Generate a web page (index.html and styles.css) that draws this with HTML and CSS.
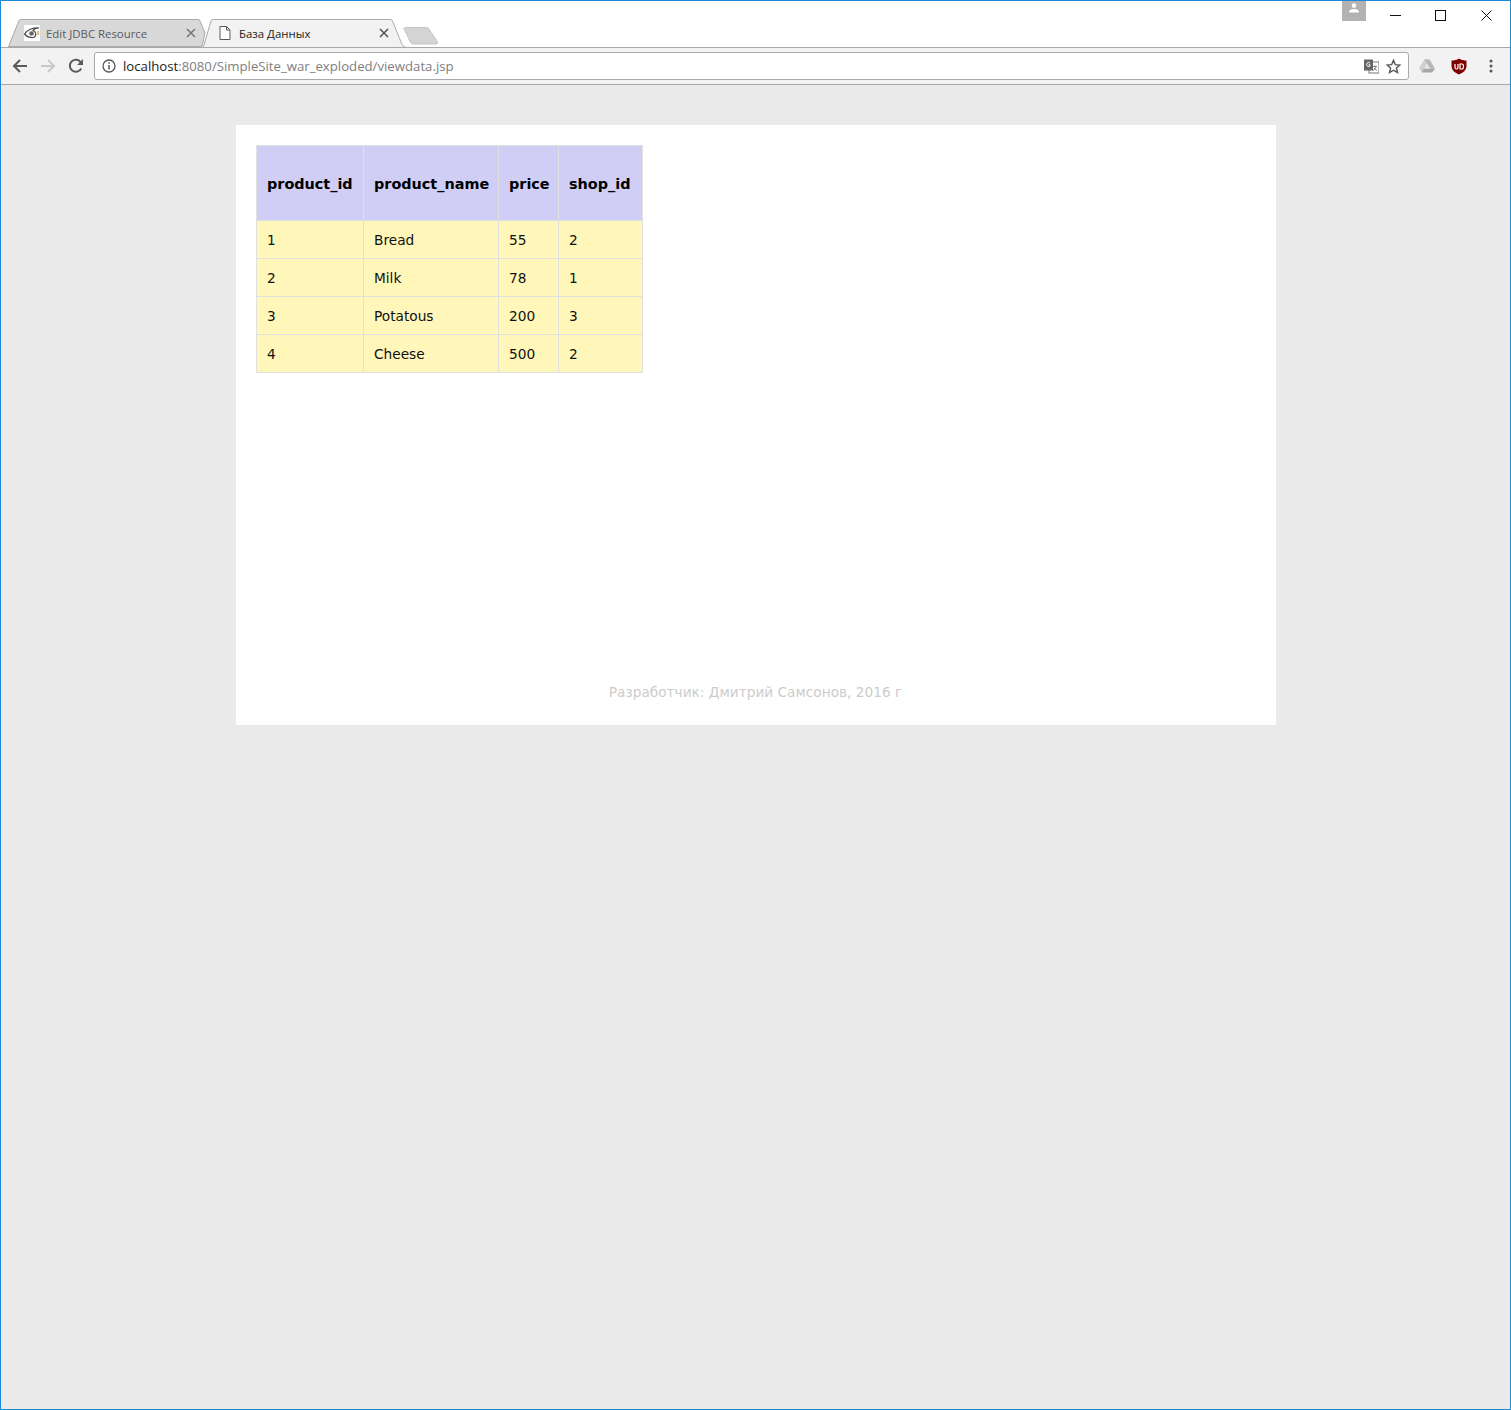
FILE: index.html
```html
<!DOCTYPE html>
<html>
<head>
    <title>База Данных</title>
    <meta charset="UTF-8">
    <link rel="stylesheet" href="styles.css">
</head>
<body>
    <div class="window">
        <div class="titlebar">
            <div class="tabs">
                <div class="tab tab-back">
                    <svg class="tab-shape" width="200" height="28" viewBox="0 0 200 28"><path d="M0.5 27.500 L11 1.500 Q11.500 0.500 13 0.500 H190 Q191.500 0.500 192 2 L197 14 L194 27.500 Z" fill="#d8d8d8" stroke="#a9a9a9"/></svg>
                    <svg class="favicon" width="16" height="16" viewBox="0 0 16 16">
                        <rect width="16" height="16" fill="#fff"/>
                        <path d="M0.500 9 C3 5 9 2.500 15 3 C12 3 10 4 9 5.500 C12 6.500 12.500 10 10.500 12 C7.500 13.500 3 12 0.500 9 Z" fill="#fff" stroke="#4a4a4a" stroke-width="1.200"/>
                        <circle cx="7.500" cy="8.500" r="2.300" fill="#666"/>
                        <path d="M14 6 V10" stroke="#e8a34a" stroke-width="1.500"/>
                    </svg>
                    <span class="tab-title">Edit JDBC Resource</span>
                    <svg class="tab-close" width="10" height="10" viewBox="0 0 10 10"><path d="M1 1 L9 9 M9 1 L1 9" stroke="#777" stroke-width="1.600"/></svg>
                </div>
                <div class="tab tab-active">
                    <svg class="tab-shape" width="206" height="28" viewBox="0 0 206 28"><path d="M0 27.500 H0.500 L8 2 Q8.500 0.500 10.500 0.500 H187 Q189 0.500 189.500 2 L199 25.500 Q200 27.500 202 27.500 H206 V28 H0 Z" fill="#f2f2f2" stroke="none"/><path d="M0 27.500 H0.500 L8 2 Q8.500 0.500 10.500 0.500 H187 Q189 0.500 189.500 2 L199 25.500 Q200 27.500 202 27.500" fill="none" stroke="#a9a9a9"/></svg>
                    <svg class="favicon" width="16" height="16" viewBox="0 0 16 16"><path d="M3 1.500 H9.500 L13 5 V14.500 H3 Z M9.500 1.500 V5 H13" fill="#fff" stroke="#5a5a5a"/></svg>
                    <span class="tab-title tab-title-active">База Данных</span>
                    <svg class="tab-close" width="10" height="10" viewBox="0 0 10 10"><path d="M1 1 L9 9 M9 1 L1 9" stroke="#555" stroke-width="1.600"/></svg>
                </div>
                <svg class="new-tab" width="36" height="19" viewBox="0 0 36 19"><path d="M1 1.500 Q1 0.500 2.500 0.500 H23 Q25 0.500 26 2 L34.500 15 Q35 17 33 17 H10 Q8.500 17 7.500 15.500 Z" fill="#d4d4d4" stroke="#c4c4c4"/></svg>
            </div>
            <div class="window-controls">
                <div class="profile">
                    <svg width="12" height="10" viewBox="0 0 12 10"><circle cx="6" cy="2.600" r="2.300" fill="#fff"/><path d="M1 9.500 C1 6.500 4 6 6 6 C8 6 11 6.500 11 9.500 Z" fill="#fff"/></svg>
                </div>
                <div class="control">
                    <svg width="11" height="11" viewBox="0 0 11 11"><path d="M0 5.500 H11" stroke="#111"/></svg>
                </div>
                <div class="control">
                    <svg width="11" height="11" viewBox="0 0 11 11"><rect x="0.500" y="0.500" width="10" height="10" fill="none" stroke="#111"/></svg>
                </div>
                <div class="control control-last">
                    <svg width="11" height="11" viewBox="0 0 11 11"><path d="M0.500 0.500 L10.500 10.500 M10.500 0.500 L0.500 10.500" stroke="#111"/></svg>
                </div>
            </div>
        </div>
        <div class="toolbar">
            <div class="nav">
                <svg width="16" height="16" viewBox="0 0 16 16"><path d="M15 8 H2.500 M8 2 L2 8 L8 14" fill="none" stroke="#5a5a5a" stroke-width="2"/></svg>
                <svg width="16" height="16" viewBox="0 0 16 16"><path d="M1 8 H13.500 M8 2 L14 8 L8 14" fill="none" stroke="#c9c9c9" stroke-width="2"/></svg>
                <svg width="16" height="16" viewBox="0 0 16 16"><path d="M13.200 10.500 A6 6 0 1 1 13 4.700" fill="none" stroke="#5a5a5a" stroke-width="2"/><path d="M15 1 V7 H9 Z" fill="#5a5a5a"/></svg>
            </div>
            <div class="omnibox">
                <svg class="info" width="14" height="14" viewBox="0 0 14 14"><circle cx="7" cy="7" r="6" fill="none" stroke="#555" stroke-width="1.300"/><path d="M7 6 V10.500 M7 3.300 V4.800" stroke="#555" stroke-width="1.500"/></svg>
                <div class="url"><span class="host">localhost</span>:8080/SimpleSite_war_exploded/viewdata.jsp</div>
                <svg class="translate" width="15" height="15" viewBox="0 0 15 15"><rect x="5" y="3" width="10" height="11" fill="#fff" stroke="#777"/><rect x="0" y="0.500" width="9" height="11" fill="#666"/><path d="M6 4 A2 2 0 1 0 6 7 V5.800 H4.500" fill="none" stroke="#fff"/><path d="M9 7.500 H13 M11 6.500 V7.500 M12 7.500 C11.500 10 10 11 9 11.500 M10 9 C10.700 10.300 11.800 11 13 11.500" fill="none" stroke="#777" stroke-width="0.900"/></svg>
                <svg class="star" width="15" height="15" viewBox="0 0 15 15"><path d="M7.500 1.300 L9.300 5.600 L14 6 L10.400 9 L11.500 13.600 L7.500 11.200 L3.500 13.600 L4.600 9 L1 6 L5.700 5.600 Z" fill="none" stroke="#555" stroke-width="1.400"/></svg>
            </div>
            <div class="extensions">
                <svg width="16" height="14" viewBox="0 0 16 14"><path d="M5.500 0.500 H10.500 L5 10 L2.700 13.500 L0 9 Z" fill="#cfcfcf"/><path d="M5.500 0.500 H10.500 L16 9.500 H11 Z" fill="#b8b8b8"/><path d="M5 9.500 H16 L13.300 13.500 H2.700 Z" fill="#a8a8a8"/><path d="M8 5 L10.500 9.500 H5.500 Z" fill="#e4e4e4"/></svg>
                <svg width="16" height="17" viewBox="0 0 16 17"><path d="M8 0.500 C10 2 13 2.500 15.500 2.500 V8 C15.500 12 12 15 8 16.500 C4 15 0.500 12 0.500 8 V2.500 C3 2.500 6 2 8 0.500 Z" fill="#800000"/><path d="M4 6 V9.500 Q4 11 5.500 11 Q7 11 7 9.500 V6 M9 6 H11 Q12.500 6 12.500 8.500 Q12.500 11 11 11 H9 Z" fill="none" stroke="#fff" stroke-width="1.200"/></svg>
                <svg class="menu" width="4" height="14" viewBox="0 0 4 14"><circle cx="2" cy="2" r="1.500" fill="#555"/><circle cx="2" cy="7" r="1.500" fill="#555"/><circle cx="2" cy="12" r="1.500" fill="#555"/></svg>
            </div>
        </div>
        <div class="page">
            <div class="content">
                <table class="data">
                    <colgroup>
                        <col class="col-id">
                        <col class="col-name">
                        <col class="col-price">
                        <col class="col-shop">
                    </colgroup>
                    <tr>
                        <th>product_id</th>
                        <th>product_name</th>
                        <th>price</th>
                        <th>shop_id</th>
                    </tr>
                    <tr><td>1</td><td>Bread</td><td>55</td><td>2</td></tr>
                    <tr><td>2</td><td>Milk</td><td>78</td><td>1</td></tr>
                    <tr><td>3</td><td>Potatous</td><td>200</td><td>3</td></tr>
                    <tr><td>4</td><td>Cheese</td><td>500</td><td>2</td></tr>
                </table>
                <div class="footer">Разработчик: Дмитрий Самсонов, 2016 г</div>
            </div>
        </div>
    </div>
</body>
</html>
```

FILE: styles.css
```css
html, body {
    margin: 0;
    height: 100%;
}
.window {
    box-sizing: border-box;
    height: 1410px;
    border: 1px solid #1a8ad4;
    display: flex;
    flex-direction: column;
    background: #eaeaea;
}
.titlebar {
    height: 46px;
    background: #fff;
    display: flex;
    justify-content: space-between;
    border-bottom: 1px solid #a9a9a9;
}
.tabs {
    display: flex;
    padding: 18px 0 0 7px;
}
.tab {
    position: relative;
    width: 200px;
    height: 28px;
    margin-right: -5px;
    display: flex;
    align-items: center;
    padding: 0 0 0 16px;
    box-sizing: border-box;
    font: 11.4px "Open Sans", sans-serif;
    color: #5a5a5a;
}
.tab-shape {
    position: absolute;
    left: 0;
    top: 0;
}
.tab .favicon, .tab .tab-title, .tab .tab-close {
    position: relative;
}
.tab-title {
    margin-left: 6px;
    flex: 1;
}
.tab-title-active {
    color: #222;
}
.tab-close {
    margin-right: 12px;
}
.tab-active {
    padding-left: 14px;
}
.tab-active .tab-close {
    margin-right: 14px;
}
.new-tab {
    margin: 8px 0 0 5px;
}
.window-controls {
    display: flex;
    align-items: flex-start;
}
.profile {
    width: 24px;
    height: 20px;
    background: #b2b2b2;
    display: flex;
    justify-content: center;
    padding-top: 2px;
    box-sizing: border-box;
    margin-right: 7px;
}
.control {
    width: 45px;
    height: 29px;
    display: flex;
    align-items: center;
    justify-content: center;
}
.control-last {
    width: 47px;
}
.toolbar {
    height: 36px;
    background: #f2f2f2;
    border-bottom: 1px solid #a9a9a9;
    display: flex;
    align-items: center;
}
.nav {
    display: flex;
    gap: 12px;
    padding-left: 11px;
    width: 93px;
    box-sizing: border-box;
}
.omnibox {
    width: 1315px;
    height: 28px;
    box-sizing: border-box;
    background: #fff;
    border: 1px solid #a9a9a9;
    border-radius: 3px;
    display: flex;
    align-items: center;
    padding: 0 7px;
}
.info {
    margin-right: 7px;
}
.url {
    flex: 1;
    font: 13.2px "Open Sans", sans-serif;
    color: #808080;
}
.host {
    color: #222;
}
.translate {
    margin-right: 7px;
}
.extensions {
    display: flex;
    align-items: center;
    padding-left: 10px;
    gap: 16px;
}
.menu {
    margin-left: 6px;
}
.page {
    flex: 1;
    display: flex;
    justify-content: center;
    padding-top: 40px;
}
.content {
    width: 1040px;
    height: 600px;
    background: #fff;
    box-sizing: border-box;
    padding: 20px;
    position: relative;
    font: 13.7px "DejaVu Sans", Verdana, sans-serif;
}
.data {
    border-collapse: collapse;
    table-layout: fixed;
    width: 386px;
    font-size: 13.7px;
}
.col-id {
    width: 107px;
}
.col-name {
    width: 135px;
}
.col-price {
    width: 60px;
}
.col-shop {
    width: 84px;
}
.data th, .data td {
    border: 1px solid #e0e0e0;
    padding: 0 0 0 10.5px;
    text-align: left;
    white-space: nowrap;
}
.data th {
    background: #d1cef6;
    height: 72px;
    padding-top: 2px;
    color: #000;
    font-size: 14.4px;
    font-weight: bold;
}
.data td {
    background: #fff7b9;
    height: 37px;
    color: #111;
}
.footer {
    position: absolute;
    left: 0;
    right: 0;
    bottom: 25px;
    text-align: center;
    color: #ccc;
}
```
